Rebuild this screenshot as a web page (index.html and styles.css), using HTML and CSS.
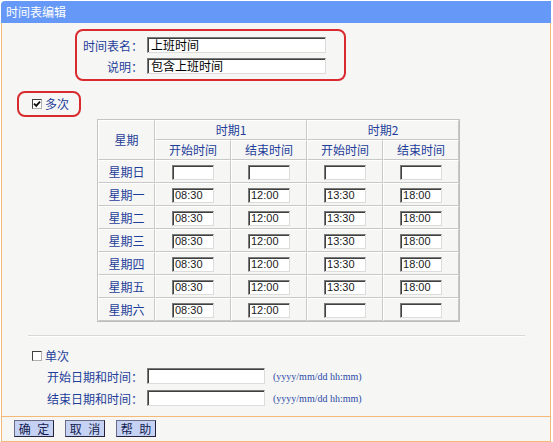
FILE: index.html
```html
<!DOCTYPE html>
<html lang="zh-CN">
<head>
<meta charset="utf-8">
<title>时间表编辑</title>
<link rel="stylesheet" href="styles.css">
</head>
<body>
<div class="panel">
  <div class="title">时间表编辑</div>
  <div class="content">
    <div class="redbox namebox">
      <div class="frow"><span class="flabel">时间表名：</span><span class="inp wide">上班时间</span></div>
      <div class="frow"><span class="flabel">说明：</span><span class="inp wide">包含上班时间</span></div>
    </div>
    <div class="redbox multibox">
      <span class="chk"><svg viewBox="0 0 8 8" width="8" height="8"><path d="M1 3.6 L3.2 5.8 L7 1.6" fill="none" stroke="#111" stroke-width="1.9"/></svg></span><span class="lbl">多次</span>
    </div>
    <table class="grid">
      <colgroup><col class="c0"><col class="c1"><col class="c1"><col class="c1"><col class="c1"></colgroup>
      <tr class="hr"><td rowspan="2">星期</td><td colspan="2">时期1</td><td colspan="2">时期2</td></tr>
      <tr class="hr"><td>开始时间</td><td>结束时间</td><td>开始时间</td><td>结束时间</td></tr>
      <tr class="dr"><td>星期日</td><td><span class="inp t"></span></td><td><span class="inp t"></span></td><td><span class="inp t"></span></td><td><span class="inp t"></span></td></tr>
      <tr class="dr"><td>星期一</td><td><span class="inp t">08:30</span></td><td><span class="inp t">12:00</span></td><td><span class="inp t">13:30</span></td><td><span class="inp t">18:00</span></td></tr>
      <tr class="dr"><td>星期二</td><td><span class="inp t">08:30</span></td><td><span class="inp t">12:00</span></td><td><span class="inp t">13:30</span></td><td><span class="inp t">18:00</span></td></tr>
      <tr class="dr"><td>星期三</td><td><span class="inp t">08:30</span></td><td><span class="inp t">12:00</span></td><td><span class="inp t">13:30</span></td><td><span class="inp t">18:00</span></td></tr>
      <tr class="dr"><td>星期四</td><td><span class="inp t">08:30</span></td><td><span class="inp t">12:00</span></td><td><span class="inp t">13:30</span></td><td><span class="inp t">18:00</span></td></tr>
      <tr class="dr"><td>星期五</td><td><span class="inp t">08:30</span></td><td><span class="inp t">12:00</span></td><td><span class="inp t">13:30</span></td><td><span class="inp t">18:00</span></td></tr>
      <tr class="dr"><td>星期六</td><td><span class="inp t">08:30</span></td><td><span class="inp t">12:00</span></td><td><span class="inp t"></span></td><td><span class="inp t"></span></td></tr>
    </table>
    <div class="sep"></div>
    <div class="single"><span class="chk"></span><span class="lbl">单次</span></div>
    <div class="drow"><span class="dlabel">开始日期和时间：</span><span class="inp date"></span><span class="fmt">(yyyy/mm/dd hh:mm)</span></div>
    <div class="drow"><span class="dlabel">结束日期和时间：</span><span class="inp date"></span><span class="fmt">(yyyy/mm/dd hh:mm)</span></div>
  </div>
  <div class="btnbar">
    <span class="btn">确 定</span>
    <span class="btn">取 消</span>
    <span class="btn">帮 助</span>
  </div>
</div>
</body>
</html>
```
FILE: styles.css
```css
html, body {
  margin: 0;
  padding: 0;
  background: #ffffff;
  font-family: "Noto Sans CJK SC", "Liberation Sans", sans-serif;
  font-size: 12px;
  color: #1e3e9a;
}
.panel {
  margin: 1px 0 0 1px;
  width: 550px;
}
.title {
  height: 22px;
  line-height: 22px;
  background: #6699f7;
  color: #ffffff;
  padding-left: 5px;
  border-radius: 4px 0 0 0;
}
.content {
  box-sizing: border-box;
  height: 393px;
  background: #f6f6f4;
  border-left: 1px solid #f4b877;
  border-right: 1px solid #f4b877;
  overflow: hidden;
  display: flex;
  flex-direction: column;
  align-items: flex-start;
}
.redbox {
  box-sizing: border-box;
  border: 2px solid #d92a30;
  border-radius: 8px;
}
.namebox {
  margin: 6px 0 0 73px;
  width: 271px;
  height: 52px;
  padding: 6px 0 0 6px;
  display: flex;
  flex-direction: column;
  gap: 5px;
}
.frow {
  display: flex;
  align-items: center;
  height: 16px;
  gap: 4px;
}
.flabel {
  width: 60px;
  text-align: right;
  white-space: nowrap;
}
.inp {
  box-sizing: border-box;
  display: inline-block;
  background: #ffffff;
  border: 1px solid;
  border-color: #7a7a7a #dcdcdc #dcdcdc #7a7a7a;
  box-shadow: inset 1px 1px 0 #404040;
  color: #000000;
  height: 16px;
  line-height: 14px;
  padding-left: 3px;
  vertical-align: middle;
  white-space: nowrap;
}
.wide {
  width: 179px;
}
.multibox {
  margin: 10px 0 0 15px;
  width: 64px;
  height: 26px;
  padding-left: 13px;
  display: flex;
  align-items: center;
  gap: 3px;
}
.chk {
  box-sizing: border-box;
  width: 10px;
  height: 10px;
  background: #ffffff;
  border: 1px solid;
  border-color: #404040 #b0b0b0 #b0b0b0 #404040;
  display: flex;
  align-items: center;
  justify-content: center;
}
.lbl {
  line-height: 16px;
}
.grid {
  margin: 2px 0 0 95px;
  border-collapse: separate;
  border-spacing: 0;
  border: 1px solid;
  border-color: #c4c4c4 #bdbdbd #bdbdbd #c4c4c4;
  table-layout: fixed;
  width: 361px;
}
.c0 { width: 57px; }
.c1 { width: 76px; }
.grid td {
  padding: 0;
  text-align: center;
  border: 1px solid;
  border-color: #ffffff #c8c8c8 #c8c8c8 #ffffff;
  line-height: 14px;
}
.hr td { height: 18px; }
.dr td { height: 21px; }
.inp.t {
  width: 42px;
  height: 15px;
  line-height: 13px;
  padding-left: 2px;
  text-align: left;
  font-family: "Liberation Sans", sans-serif;
  font-size: 11px;
  color: #1a1a1a;
}
.sep {
  margin: 13px 0 0 26px;
  width: 497px;
  height: 1px;
  background: #d8d8d8;
  border-bottom: 1px solid #ffffff;
}
.single {
  margin: 10px 0 0 30px;
  height: 18px;
  display: flex;
  align-items: center;
  gap: 3px;
}
.drow {
  height: 22px;
  display: flex;
  align-items: center;
  margin-left: 45px;
}
.dlabel {
  width: 96px;
  text-align: right;
  white-space: nowrap;
  margin-right: 4px;
}
.inp.date {
  width: 118px;
}
.fmt {
  margin-left: 8px;
  font-family: "Liberation Serif", serif;
  font-size: 10px;
  color: #2a4aa8;
}
.btnbar {
  box-sizing: border-box;
  height: 26px;
  background: #f6f6f4;
  border: 1px solid #f4b877;
  padding: 3px 0 0 12px;
  display: flex;
  align-items: flex-start;
  gap: 11px;
}
.btn {
  box-sizing: border-box;
  width: 40px;
  height: 17px;
  line-height: 15px;
  text-align: center;
  background: #c6d2f4;
  border: 1px solid;
  border-color: #6a6a86 #22223a #22223a #6a6a86;
  color: #141c50;
  white-space: pre;
  word-spacing: 4px;
}
```
